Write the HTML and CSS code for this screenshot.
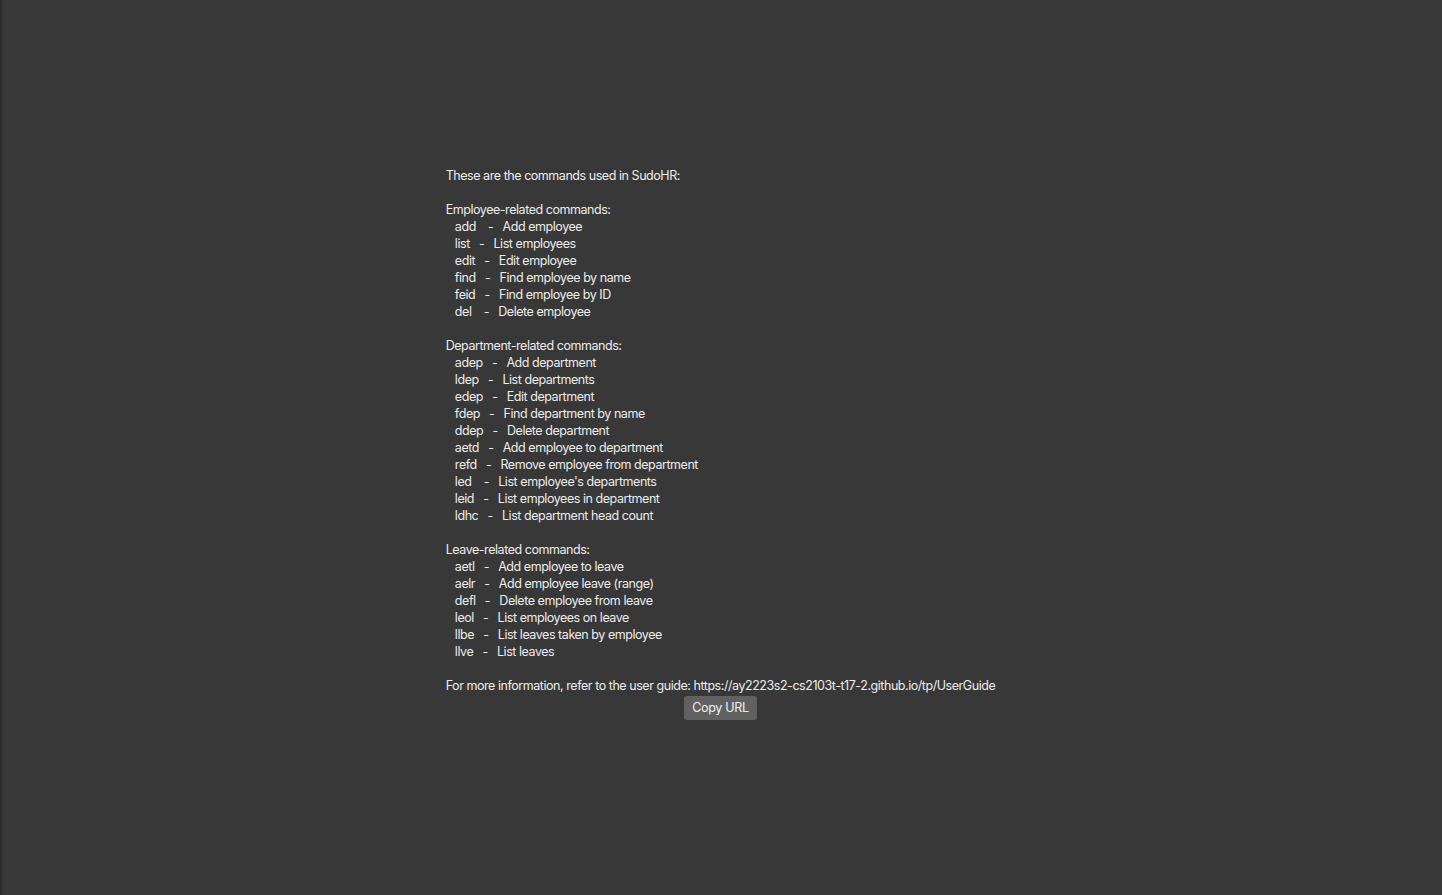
FILE: index.html
```html
<!DOCTYPE html>
<html>
<head>
<meta charset="utf-8">
<link rel="stylesheet" href="styles.css">
</head>
<body>
<div class="frame">
  <div class="help">
    <div class="text">These are the commands used in SudoHR:

Employee-related commands:
   add    -   Add employee
   list   -   List employees
   edit   -   Edit employee
   find   -   Find employee by name
   feid   -   Find employee by ID
   del    -   Delete employee

Department-related commands:
   adep   -   Add department
   ldep   -   List departments
   edep   -   Edit department
   fdep   -   Find department by name
   ddep   -   Delete department
   aetd   -   Add employee to department
   refd   -   Remove employee from department
   led    -   List employee's departments
   leid   -   List employees in department
   ldhc   -   List department head count

Leave-related commands:
   aetl   -   Add employee to leave
   aelr   -   Add employee leave (range)
   defl   -   Delete employee from leave
   leol   -   List employees on leave
   llbe   -   List leaves taken by employee
   llve   -   List leaves

For more information, refer to the user guide: https://ay2223s2-cs2103t-t17-2.github.io/tp/UserGuide</div>
    <button class="copy">Copy URL</button>
  </div>
</div>
</body>
</html>
```

FILE: styles.css
```css
html, body {
  margin: 0;
  padding: 0;
  height: 100%;
}
body {
  background: #383838;
  font-family: Inter, "Noto Sans", sans-serif;
}
.frame {
  height: 895px;
  box-sizing: border-box;
  border-left: 2px solid #2c2c2c;
  display: flex;
  align-items: center;
  justify-content: center;
  padding-right: 3px;
  padding-bottom: 9px;
}
.help {
  display: flex;
  flex-direction: column;
  align-items: center;
  gap: 2px;
}
.text {
  white-space: pre;
  color: #ececec;
  font-size: 12.5px;
  line-height: 17px;
  letter-spacing: -0.45px;
}
.copy {
  font-family: Inter, "Noto Sans", sans-serif;
  font-size: 12.5px;
  letter-spacing: -0.3px;
  color: #f0f0f0;
  background: #616161;
  border: none;
  border-radius: 3px;
  padding: 4px 8px;
  height: 24px;
  line-height: 16px;
}
```
